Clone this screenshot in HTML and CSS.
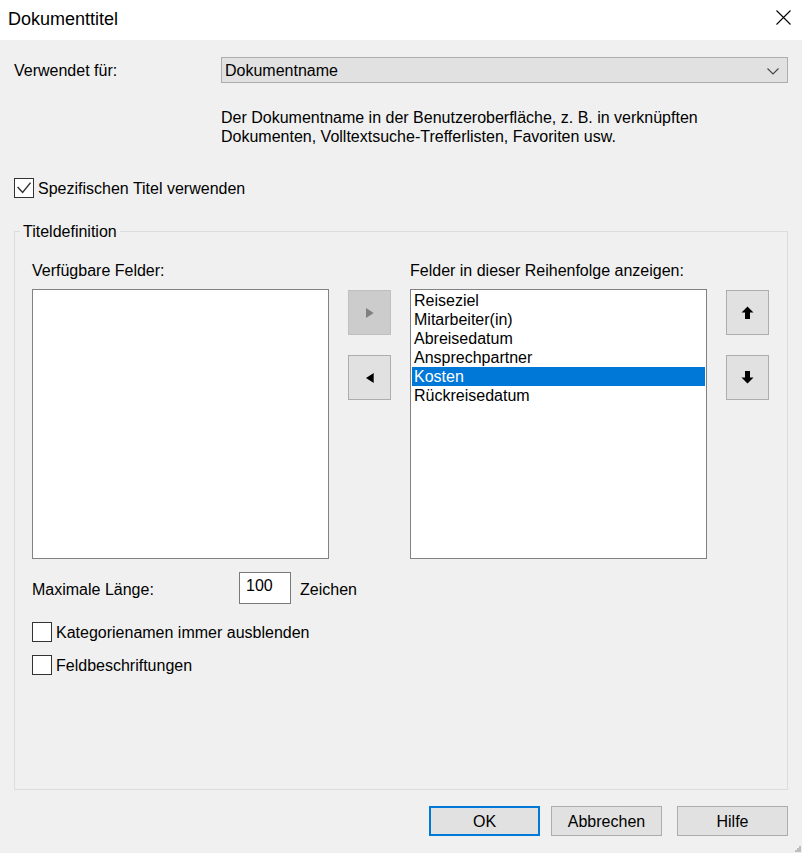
FILE: index.html
```
<!DOCTYPE html>
<html lang="de">
<head>
<meta charset="utf-8">
<title>Dokumenttitel</title>
<link rel="stylesheet" href="styles.css">
</head>
<body>
<div class="dialog">
  <header class="titlebar">
    <span class="title">Dokumenttitel</span>
    <svg class="close" width="15" height="15" viewBox="0 0 15 15"><path d="M0.5 0.5 L14.5 14.5 M14.5 0.5 L0.5 14.5" stroke="#000" stroke-width="1.1" fill="none"/></svg>
  </header>
  <main class="content">
    <div class="usage">
      <span class="usage-label">Verwendet für:</span>
      <div class="combo">
        <span>Dokumentname</span>
        <svg width="12" height="7" viewBox="0 0 12 7"><polyline points="0.5,0.5 6,6 11.5,0.5" fill="none" stroke="#444" stroke-width="1.1"/></svg>
      </div>
    </div>
    <p class="desc">Der Dokumentname in der Benutzeroberfläche, z. B. in verknüpften<br>Dokumenten, Volltextsuche-Trefferlisten, Favoriten usw.</p>
    <label class="check check-main">
      <span class="box"><svg width="18" height="18" viewBox="0 0 18 18"><polyline points="2.6,8 7.6,13.4 15.6,3.6" fill="none" stroke="#333" stroke-width="1.5"/></svg></span>
      <span>Spezifischen Titel verwenden</span>
    </label>
    <fieldset class="group">
      <legend>Titeldefinition</legend>
      <div class="lists">
        <div class="list-label">Verfügbare Felder:</div>
        <div class="spacer"></div>
        <div class="list-label">Felder in dieser Reihenfolge anzeigen:</div>
        <div class="spacer"></div>
        <div class="listbox"></div>
        <div class="btncol">
          <button class="sq disabled" type="button"><svg width="8" height="10" viewBox="0 0 8 10"><polygon points="0,0 7.7,5 0,10" fill="#808080"/></svg></button>
          <button class="sq" type="button"><svg width="8" height="10" viewBox="0 0 8 10"><polygon points="7.7,0 0,5 7.7,10" fill="#000"/></svg></button>
        </div>
        <div class="listbox">
          <div class="item">Reiseziel</div>
          <div class="item">Mitarbeiter(in)</div>
          <div class="item">Abreisedatum</div>
          <div class="item">Ansprechpartner</div>
          <div class="item selected">Kosten</div>
          <div class="item">Rückreisedatum</div>
        </div>
        <div class="btncol">
          <button class="sq" type="button"><svg width="13" height="13" viewBox="0 0 13 13"><path d="M6.5 0.5 L12.5 6.5 L9 6.5 L9 13 L4 13 L4 6.5 L0.5 6.5 Z" fill="#000"/></svg></button>
          <button class="sq" type="button"><svg width="13" height="13" viewBox="0 0 13 13"><path d="M6.5 12.5 L12.5 6.5 L9 6.5 L9 0 L4 0 L4 6.5 L0.5 6.5 Z" fill="#000"/></svg></button>
        </div>
      </div>
      <div class="maxlen">
        <span class="maxlen-label">Maximale Länge:</span>
        <div class="numbox">100</div>
        <span class="unit">Zeichen</span>
      </div>
      <label class="check check-a"><span class="box"></span><span>Kategorienamen immer ausblenden</span></label>
      <label class="check check-b"><span class="box"></span><span>Feldbeschriftungen</span></label>
    </fieldset>
    <div class="actions">
      <button class="btn default" type="button">OK</button>
      <button class="btn cancel" type="button">Abbrechen</button>
      <button class="btn help" type="button">Hilfe</button>
    </div>
  </main>
  <svg class="grip" width="6" height="6" viewBox="0 0 6 6"><g fill="#bdbdbd"><rect x="4" y="0" width="2" height="2"/><rect x="2" y="2" width="2" height="2"/><rect x="4" y="2" width="2" height="2"/><rect x="0" y="4" width="2" height="2"/><rect x="2" y="4" width="2" height="2"/><rect x="4" y="4" width="2" height="2"/></g></svg>
</div>
</body>
</html>
```
FILE: styles.css
```
* { box-sizing: border-box; }
html, body { margin: 0; padding: 0; }
body {
  font-family: "Liberation Sans", Arial, sans-serif;
  font-size: 16px;
  line-height: 19px;
  color: #000;
  background: #f0f0f0;
}
.dialog {
  position: relative;
  width: 802px;
  height: 853px;
  overflow: hidden;
  background: #f0f0f0;
}
.titlebar {
  height: 40px;
  background: #fff;
  display: flex;
  justify-content: space-between;
  align-items: flex-start;
  padding: 0 11px 0 8px;
}
.title {
  font-size: 18px;
  line-height: 20px;
  margin-top: 9px;
}
.close { margin-top: 10px; }
.content { padding: 17px 14px 0 14px; }
.usage {
  display: grid;
  grid-template-columns: 207px 1fr;
  align-items: center;
}
.combo {
  height: 26px;
  border: 1px solid #adadad;
  background: #e1e1e1;
  display: flex;
  align-items: center;
  justify-content: space-between;
  padding: 0 8px 0 3px;
}
.combo svg { margin-top: 2px; }
.desc { margin: 25px 0 0 207px; }
.check {
  display: flex;
  align-items: center;
  gap: 4px;
  height: 20px;
}
.box {
  width: 20px;
  height: 20px;
  border: 1px solid #333;
  background: #fff;
  flex: none;
  display: flex;
}
.check-main { margin-top: 32px; }
.group {
  margin: 24px 0 0 0;
  border: 1px solid #dcdcdc;
  padding: 20px 0 114px 17px;
  min-width: 0;
}
.group legend {
  padding: 0 3px;
  margin-left: -12px;
  line-height: 19px;
}
.lists {
  display: grid;
  grid-template-columns: 297px 43px 297px 43px;
  column-gap: 19px;
  row-gap: 9px;
}
.list-label { white-space: nowrap; }
.listbox {
  height: 270px;
  border: 1px solid #828282;
  background: #fff;
  padding-top: 1px;
}
.item {
  margin: 0 1px;
  padding-left: 2px;
  height: 19px;
}
.item.selected { background: #0078d7; color: #fff; }
.btncol {
  display: flex;
  flex-direction: column;
  gap: 20px;
  padding-top: 1px;
}
.sq {
  width: 43px;
  height: 45px;
  border: 1px solid #adadad;
  background: #e1e1e1;
  padding: 0;
  display: flex;
  align-items: center;
  justify-content: center;
}
.sq.disabled { background: #cccccc; border-color: #bfbfbf; }
.maxlen {
  display: flex;
  align-items: flex-start;
  margin-top: 13px;
}
.maxlen-label { width: 207px; margin-top: 8px; }
.numbox {
  width: 52px;
  height: 32px;
  border: 1px solid #7a7a7a;
  background: #fff;
  padding: 3px 6px;
}
.unit { margin: 8px 0 0 9px; }
.check-a { margin-top: 18px; }
.check-b { margin-top: 13px; }
.actions {
  display: flex;
  justify-content: flex-end;
  margin-top: 16px;
}
.btn {
  width: 111px;
  height: 30px;
  border: 1px solid #adadad;
  background: #e1e1e1;
  font: inherit;
  color: #000;
  padding: 0;
}
.btn.default { border: 2px solid #0078d7; }
.btn.cancel { margin-left: 11px; }
.btn.help { margin-left: 15px; }
.grip { position: absolute; right: 1px; bottom: 1px; }
```
